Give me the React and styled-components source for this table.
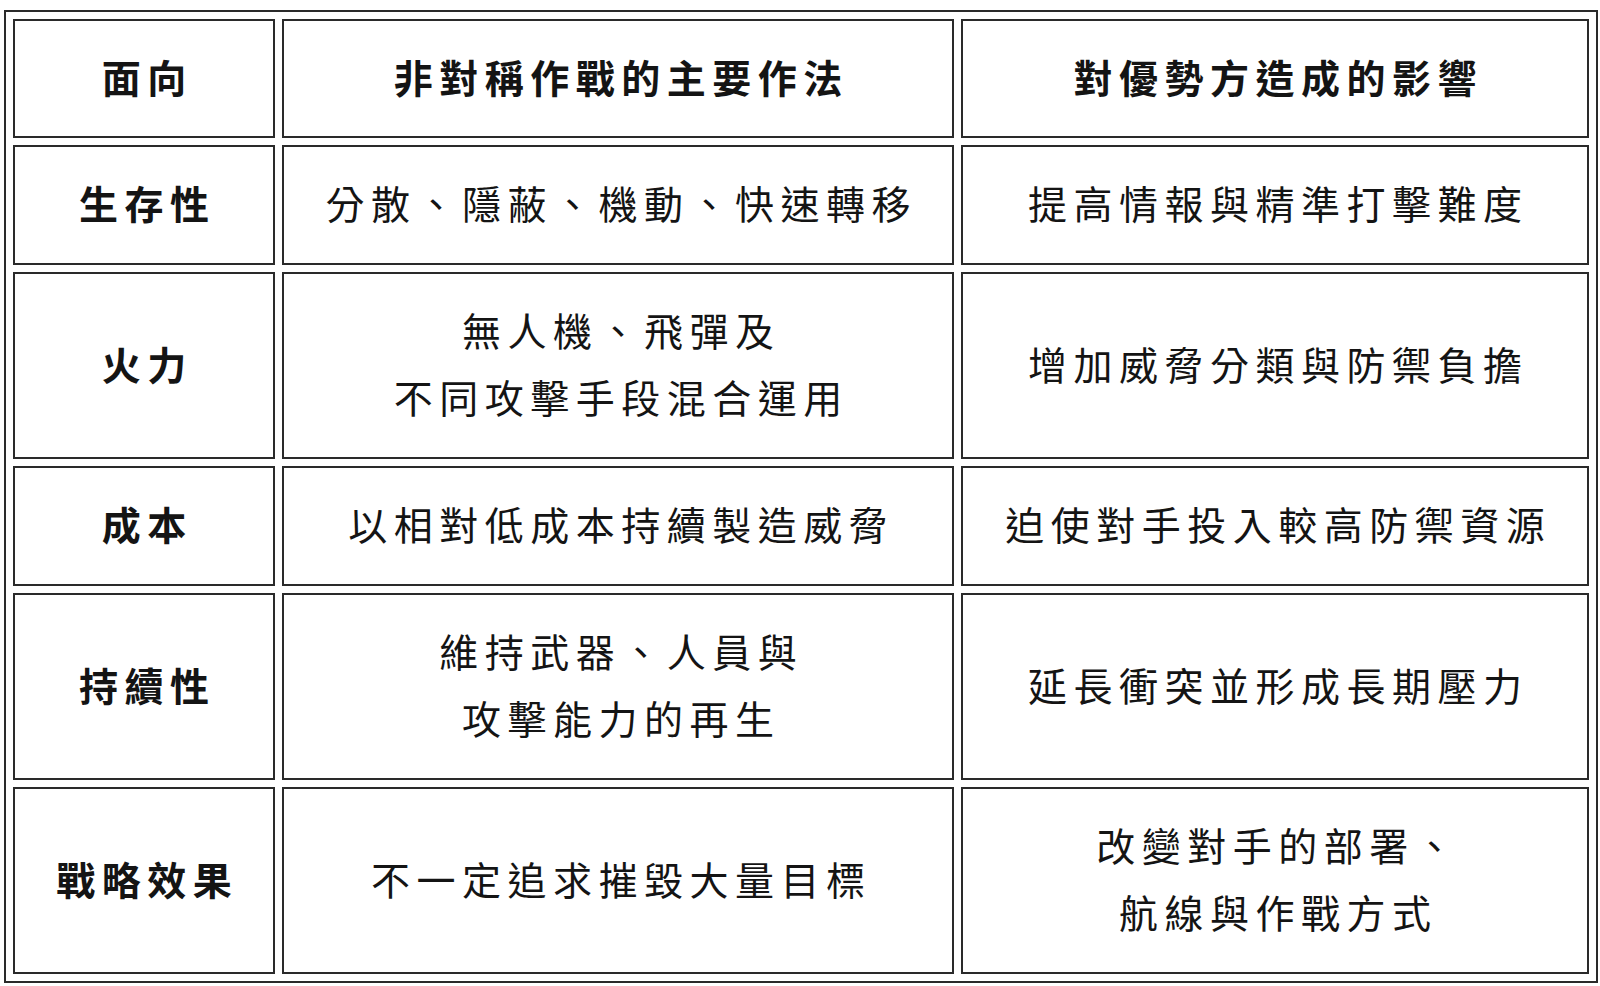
import styled, { createGlobalStyle } from "styled-components";

const GlobalStyle = createGlobalStyle`
  html, body {
    margin: 0;
    padding: 0;
    background: #ffffff;
  }
  body {
    font-family: "Noto Sans CJK TC", "Noto Sans CJK SC", "Liberation Serif", serif;
    color: #141414;
  }
`;

const Page = styled.div`
  padding: 10px 2px 6px 4px;
`;

const Table = styled.table`
  width: 1594px;
  table-layout: fixed;
  border: 2px solid #2a2a2a;
  border-spacing: 7px;
`;

const HeadCell = styled.th`
  border: 2px solid #2a2a2a;
  padding: 22px 0 26px 6.5px;
  font-size: 39px;
  font-weight: 700;
  line-height: 67px;
  letter-spacing: 6.5px;
  text-align: center;
  vertical-align: middle;
  color: #141414;
`;

const Cell = styled.td`
  border: 2px solid #2a2a2a;
  padding: 22px 0 27px 6.5px;
  font-size: 39px;
  font-weight: ${({ $bold }) => ($bold ? 700 : 400)};
  line-height: 67px;
  letter-spacing: 6.5px;
  text-align: center;
  vertical-align: middle;
  color: #141414;
`;

const Line = styled.div`
  white-space: nowrap;
`;

const headers = ["面向", "非對稱作戰的主要作法", "對優勢方造成的影響"];

const rows = [
  ["生存性", ["分散、隱蔽、機動、快速轉移"], ["提高情報與精準打擊難度"]],
  ["火力", ["無人機、飛彈及", "不同攻擊手段混合運用"], ["增加威脅分類與防禦負擔"]],
  ["成本", ["以相對低成本持續製造威脅"], ["迫使對手投入較高防禦資源"]],
  ["持續性", ["維持武器、人員與", "攻擊能力的再生"], ["延長衝突並形成長期壓力"]],
  ["戰略效果", ["不一定追求摧毀大量目標"], ["改變對手的部署、", "航線與作戰方式"]],
];

const Lines = ({ items }) => items.map((text) => <Line key={text}>{text}</Line>);

const App = () => (
  <>
    <GlobalStyle />
    <Page>
      <Table>
        <colgroup>
          <col style={{ width: 262 }} />
          <col style={{ width: 672 }} />
          <col style={{ width: 628 }} />
        </colgroup>
        <thead>
          <tr>
            {headers.map((h) => (
              <HeadCell key={h}>{h}</HeadCell>
            ))}
          </tr>
        </thead>
        <tbody>
          {rows.map(([aspect, method, effect]) => (
            <tr key={aspect}>
              <Cell $bold>{aspect}</Cell>
              <Cell><Lines items={method} /></Cell>
              <Cell><Lines items={effect} /></Cell>
            </tr>
          ))}
        </tbody>
      </Table>
    </Page>
  </>
);

export default App;
